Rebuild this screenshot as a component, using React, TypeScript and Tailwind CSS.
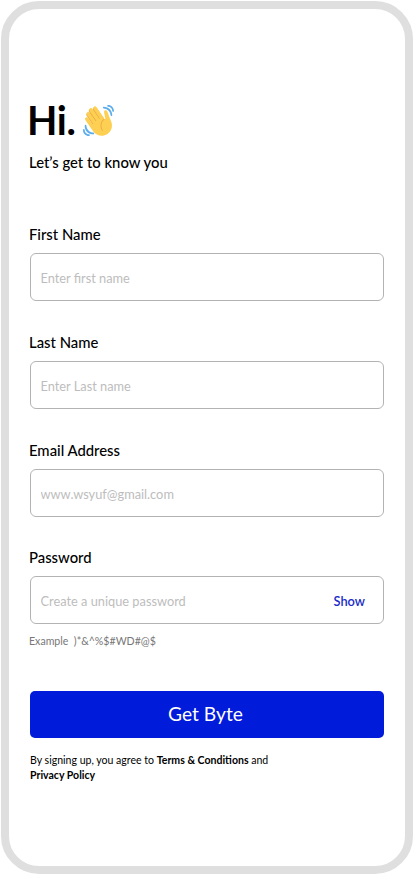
import { useState } from "react";
import type { ReactNode } from "react";

const WavingHand = () => (
  <svg viewBox="0 0 36 36" className="h-[31px] w-[31px]" aria-hidden="true">
    <path
      fill="#EDAE45"
      d="M4.861 9.147c.94-.657 2.357-.531 3.201.166l-.968-1.407c-.779-1.111-.5-2.313.612-3.093 1.112-.777 4.263 1.312 4.263 1.312-.786-1.122-.639-2.544.483-3.331 1.122-.784 2.67-.513 3.456.611l10.292 14.72L25 31l-11.083-4.042L4.25 12.625c-.793-1.129-.519-2.686.611-3.478z"
    />
    <path
      fill="#FDD053"
      d="M2.695 17.336s-1.132-1.65.519-2.781c1.649-1.131 2.78.518 2.78.518l5.251 7.658c.181-.302.379-.6.6-.894L4.557 11.21s-1.131-1.649.519-2.78c1.649-1.131 2.78.518 2.78.518l6.855 9.997c.255-.208.516-.417.785-.622L7.549 6.732s-1.131-1.649.519-2.78c1.649-1.131 2.78.518 2.78.518l7.947 11.589c.292-.179.581-.334.871-.498L12.238 4.729s-1.131-1.649.518-2.78c1.649-1.131 2.78.518 2.78.518l7.854 11.454 1.194 1.742c-4.948 3.394-5.419 9.779-2.592 13.902.565.825 1.39.26 1.39.26-3.393-4.949-2.357-10.51 2.592-13.903L24.515 8.62s-.545-1.924 1.378-2.47c1.924-.545 2.47 1.379 2.47 1.379l1.685 5.004c.668 1.984 1.379 3.961 2.32 5.831 2.657 5.28 1.07 11.842-3.94 15.279-5.465 3.747-12.936 2.354-16.684-3.11L2.695 17.336z"
    />
    <path
      fill="#5DADEC"
      d="M12 32.042C8 32.042 3.958 28 3.958 24c0-.553-.405-1-.958-1s-1.042.447-1.042 1C1.958 30 6 34.042 12 34.042c.553 0 1-.489 1-1.042s-.447-.958-1-.958zM7 34c-3 0-5-2-5-5 0-.553-.447-1-1-1s-1 .447-1 1c0 4 3 7 7 7 .553 0 1-.447 1-1s-.447-1-1-1zM24 2c-.552 0-1 .448-1 1s.448 1 1 1c4 0 8 3.589 8 8 0 .552.448 1 1 1s1-.448 1-1c0-5.514-4-10-10-10zM29 .042c-.552 0-1 .406-1 .958s.448 1.042 1 1.042c3 0 4.958 2.225 4.958 4.958 0 .552.489 1 1.042 1s.958-.448.958-1C35.958 3.163 33 .042 29 .042z"
    />
  </svg>
);

const Field = ({
  label,
  placeholder,
  type = "text",
  children,
}: {
  label: string;
  placeholder: string;
  type?: string;
  children?: ReactNode;
}) => (
  <label className="block">
    <span className="-ml-px block text-[14.85px] leading-5 font-medium">
      {label}
    </span>
    <span className="mt-[9px] flex h-12 items-center rounded-md border border-[#b3b3b3] pr-[18px] pl-[9.5px]">
      <input
        type={type}
        placeholder={placeholder}
        className="min-w-0 flex-1 pt-[3px] text-[12.8px] outline-none placeholder:text-[#bdbdbd]"
      />
      {children}
    </span>
  </label>
);

export default function App() {
  const [visible, setVisible] = useState(false);

  return (
    <div className="h-[874px] bg-white pt-px pl-px font-['Lato',sans-serif] text-black">
      <main className="h-[873px] w-[411.5px] rounded-[38px] border-8 border-[#dfdfdf] pr-[20.5px] pl-[21px]">
        <header className="-ml-[3px] pt-[87px]">
          <h1 className="flex h-12 items-center gap-[7.5px] text-[39.5px] leading-12 font-bold tracking-[-0.4px]">
            Hi. <WavingHand />
          </h1>
          <p className="mt-2 ml-0.5 text-[14.85px] leading-5 font-medium">
            Let’s get to know you
          </p>
        </header>

        <form
          className="mt-[52px]"
          onSubmit={(e) => e.preventDefault()}
        >
          <div className="space-y-[30.8px]">
            <Field label="First Name" placeholder="Enter first name" />
            <Field label="Last Name" placeholder="Enter Last name" />
            <Field label="Email Address" placeholder="www.wsyuf@gmail.com" />
            <Field
              label="Password"
              placeholder="Create a unique password"
              type={visible ? "text" : "password"}
            >
              <button
                type="button"
                className="pt-[3px] text-[12.8px] font-semibold text-[#1a2bc8]"
                onClick={() => setVisible(!visible)}
              >
                Show
              </button>
            </Field>
          </div>
          <p className="mt-[9px] -ml-px text-[10.6px] leading-4 whitespace-pre text-[#777]">
            {"Example  )*&^%$#WD#@$"}
          </p>
          <button
            type="submit"
            className="mt-[41.3px] block h-[47.5px] w-full rounded-[5px] bg-[#001bda] pr-[3px] text-[19.2px] text-white"
          >
            Get Byte
          </button>
        </form>

        <p className="mt-[14.7px] w-[250px] text-[10.56px] leading-[15px]">
          By signing up, you agree to{" "}
          <span className="font-bold">Terms &amp; Conditions</span> and{" "}
          <span className="font-bold">Privacy Policy</span>
        </p>
      </main>
    </div>
  );
}
